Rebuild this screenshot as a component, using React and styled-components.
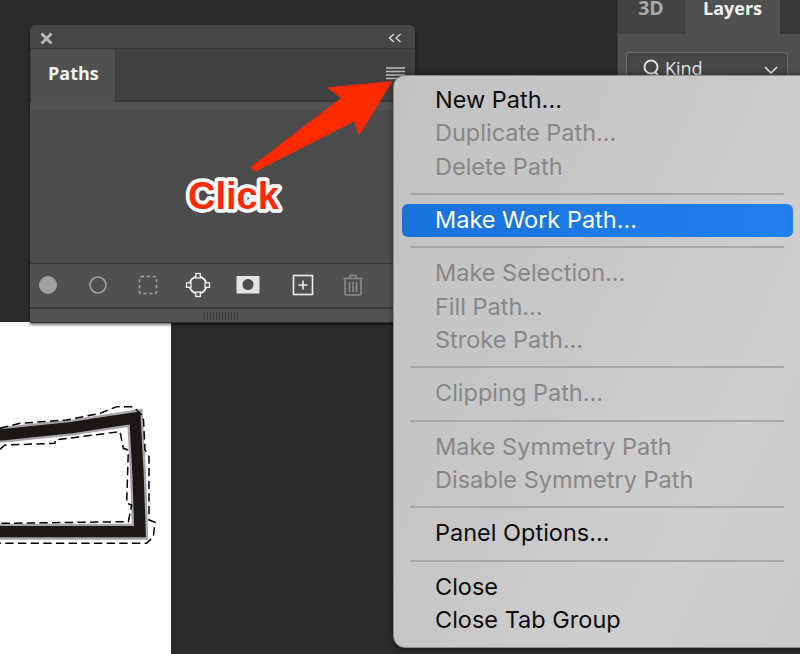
import React from "react";
import styled, { createGlobalStyle } from "styled-components";

const Global = createGlobalStyle`
  html, body { margin: 0; padding: 0; background: #282828; }
  #root { width: 800px; height: 654px; }
`;
const Desktop = styled.div`
  position: relative; width: 800px; height: 654px; overflow: hidden; background: #2a2a2a;
  font-family: "Open Sans", "Liberation Sans", sans-serif;
`;
const Artboard = styled.div`
  position: absolute; left: 0; top: 322px; width: 171px; height: 332px; background: #fff; padding-top: 68px; box-sizing: border-box;
`;
const ArtSvg = styled.svg`
  display: block;
`;
const Panel = styled.section`
  position: absolute; left: 30px; top: 25px; width: 385px; height: 298px; box-sizing: border-box;
  background: #4c4c4c; border-radius: 6px 6px 0 0;
  box-shadow: 0 2px 3px rgba(0,0,0,.55);
  display: flex; flex-direction: column; overflow: hidden;
`;
const TitleBar = styled.div`
  flex: none; background: #464646; border-bottom: 1px solid #383838;
  display: flex; align-items: center; justify-content: space-between; padding: 3px 13px 0 10px; box-sizing: content-box; height: 20px;
`;
const TabRow = styled.div`
  height: 51px; flex: none; display: flex; background: #414141; border-bottom: 2px solid #383838; box-sizing: content-box;
`;
const PathsTab = styled.div`
  width: 85px; margin-left: 1px; margin-bottom: -2px; background: #505050; border-right: 1px solid #383838; box-sizing: border-box;
  color: #f2f2f2; font-weight: 700; font-size: 18px; padding: 12px 0 0 17px; line-height: 24px;
`;
const Hamburger = styled.svg`
  margin: 18px 10px 0 auto; flex: none;
`;
const Body = styled.div`
  flex: 1; background: linear-gradient(#525252 0, #525252 8px, #4c4c4c 9px);
`;
const Footer = styled.div`
  height: 46px; flex: none; background: #505050; border-top: 1px solid #3a3a3a; border-bottom: 2px solid #3a3a3a; box-sizing: border-box;
  display: flex; align-items: center; padding: 0 0 1px 0; gap: 14px;
`;
const FootIcon = styled.svg`
  width: 36px; height: 36px; flex: none; margin-left: ${p => p.$push || 0}px;
`;
const Grip = styled.div`
  height: 14px; flex: none; background: #515151; display: flex; align-items: center; justify-content: center; border-bottom: 1px solid #2e2e2e; padding-right: 2px; box-sizing: border-box;
`;
const GripMark = styled.div`
  width: 35px; height: 8px;
  background: repeating-linear-gradient(90deg, #3a3a3a 0 1px, transparent 1px 3px);
`;
const RightDock = styled.aside`
  position: absolute; left: 617px; top: 0; width: 183px; height: 100px; background: #505050; border-left: 1px solid #3a3a3a;
`;
const DockTabs = styled.div`
  display: flex; height: 34px; background: #383838;
`;
const DockTab = styled.div`
  width: ${p => p.$w}px; box-sizing: border-box; background: ${p => p.$active ? "#505050" : "#434343"};
  color: ${p => p.$active ? "#f2f2f2" : "#a8a8a8"}; font-weight: 700; font-size: ${p => p.$active ? 18 : 19.5}px; line-height: 16px; text-align: center;
  border-right: 1px solid #383838;
`;
const KindBox = styled.div`
  margin: 18px 0 0 8px; width: 162px; height: 40px; box-sizing: border-box; border: 1px solid #6a6a6a; border-radius: 3px; background: #474747;
  display: flex; padding: 3px 9px 0 15px; color: #e4e4e4; font-size: 18px; gap: 3px; line-height: 24px;
`;
const KindLabel = styled.span`flex: 1; font-weight: 400;`;
const Menu = styled.nav`
  position: absolute; left: 393px; top: 75px; width: 420px; height: 573px; box-sizing: border-box;
  border-radius: 12px; background: linear-gradient(115deg, #c2c2c2 0%, #c9c8c8 45%, #d0cfcf 75%, #c8c8c8 100%);
  border: 1px solid #8d8d8d; padding: 8px 0 0 8px; box-shadow: 0 0 6px rgba(0,0,0,.45);
  font-family: Inter, "Liberation Sans", sans-serif; font-size: 23.5px;
`;
const Item = styled.div`
  height: 33.34px; line-height: 32px; width: 391px; box-sizing: border-box; padding-left: 33px;
  color: ${p => p.$active ? "#fff" : p.$off ? "#878787" : "#0c0c0c"};
  background: ${p => p.$active ? "linear-gradient(90deg,#1a72dc,#2080ee)" : "none"};
  border-radius: 6px; white-space: nowrap;
`;
const Sep = styled.div`
  height: 2px; margin: 9px 0 9px 8px; width: 374px; background: #a9a8a8;
`;
const Overlay = styled.svg`
  position: absolute; left: 0; top: 0; pointer-events: none;
`;
const ClickText = styled.text`
  font-family: "Liberation Sans", sans-serif; font-weight: 700; font-size: 38px; fill: #ff2a00;
  stroke: #fff; stroke-width: 7.5px; stroke-linejoin: round; paint-order: stroke;
`;

const items = [
  ["New Path...", 0], ["Duplicate Path...", 1], ["Delete Path", 1], "-",
  ["Make Work Path...", 2], "-",
  ["Make Selection...", 1], ["Fill Path...", 1], ["Stroke Path...", 1], "-",
  ["Clipping Path...", 1], "-",
  ["Make Symmetry Path", 1], ["Disable Symmetry Path", 1], "-",
  ["Panel Options...", 0], "-",
  ["Close", 0], ["Close Tab Group", 0],
];

const BAND = "M-10 136 L220 112 L330 95 L405 84 L414 250 L420 425 L-10 425";
const ANTS_OUT = "M0 115 L60 100 L200 90 L300 70 L350 50 L400 50 L430 80 L435 180 L447 200 L447 390 L465 397 L460 440 L440 460 L0 460";
const ANTS_IN = "M0 178 L15 165 L165 160 L165 150 L360 125 L370 175 L385 180 L380 340 L395 345 L385 395 L0 400";

export default function App() {
  return (
    <Desktop>
      <Global />
      <Artboard>
        <ArtSvg width="171" height="170" viewBox="0 0 513 510">
          <path d={BAND} fill="none" stroke="#a8a4ac" strokeWidth="48" />
          <path d={BAND} fill="none" stroke="#1b1715" strokeWidth="34" />
          <path d={ANTS_OUT} fill="none" stroke="#000" strokeWidth="4.5" strokeDasharray="25 13" />
          <path d={ANTS_IN} fill="none" stroke="#000" strokeWidth="4.5" strokeDasharray="25 13" />
        </ArtSvg>
      </Artboard>
      <RightDock>
        <DockTabs>
          <DockTab $w={67}>3D</DockTab>
          <DockTab $w={96} $active>Layers</DockTab>
        </DockTabs>
        <KindBox>
          <svg width="20" height="26" viewBox="0 0 20 26"><circle cx="9" cy="11" r="6.5" fill="none" stroke="#e0e0e0" strokeWidth="2" /><path d="M13 16l5 6" stroke="#e0e0e0" strokeWidth="2.5" /></svg>
          <KindLabel>Kind</KindLabel>
          <svg width="14" height="24" viewBox="0 0 14 24"><path d="M1 11l6 6 6-6" fill="none" stroke="#ddd" strokeWidth="1.6" /></svg>
        </KindBox>
      </RightDock>
      <Panel>
        <TitleBar>
          <svg width="13" height="13" viewBox="0 0 13 13"><path d="M1.500 1.500l10 10M11.500 1.500l-10 10" stroke="#b5b5b5" strokeWidth="3" /></svg>
          <svg width="14" height="10" viewBox="0 0 14 10"><path d="M6 1L1.500 5 6 9M12.500 1L8 5l4.500 4" fill="none" stroke="#e0e0e0" strokeWidth="1.3" /></svg>
        </TitleBar>
        <TabRow>
          <PathsTab>Paths</PathsTab>
          <Hamburger width="19" height="13" viewBox="0 0 19 13"><path d="M0 1H19M0 4.500H19M0 8H19M0 11.500H19" stroke="#bdbdbd" strokeWidth="1.4" /></Hamburger>
        </TabRow>
        <Body />
        <Footer>
          <FootIcon viewBox="0 0 36 36"><circle cx="18" cy="18" r="9" fill="#a0a0a0" /></FootIcon>
          <FootIcon viewBox="0 0 36 36"><circle cx="18" cy="18" r="8" fill="none" stroke="#a0a0a0" strokeWidth="1.6" /></FootIcon>
          <FootIcon viewBox="0 0 36 36"><rect x="9.500" y="9.500" width="17" height="17" rx="1.500" fill="none" stroke="#a0a0a0" strokeWidth="1.6" strokeDasharray="3.2 2.6" /></FootIcon>
          <FootIcon viewBox="0 0 36 36">
            <circle cx="18" cy="18" r="8.500" fill="none" stroke="#f0f0f0" strokeWidth="1.8" />
            <g fill="#505050" stroke="#f0f0f0" strokeWidth="1.3"><rect x="15.800" y="6.500" width="4.500" height="4.500" /><rect x="15.800" y="25" width="4.500" height="4.500" /><rect x="6.500" y="15.800" width="4.500" height="4.500" /><rect x="25" y="15.800" width="4.500" height="4.500" /></g>
          </FootIcon>
          <FootIcon viewBox="0 0 36 36"><rect x="6.500" y="9" width="23" height="17.500" rx="1" fill="#e4e4e4" /><circle cx="18" cy="17.500" r="5.500" fill="#4a4a4a" /></FootIcon>
          <FootIcon viewBox="0 0 36 36" $push={5}><rect x="8.500" y="8.500" width="19" height="19" fill="none" stroke="#eee" strokeWidth="1.6" /><path d="M13.500 18h9M18 13.500v9" stroke="#eee" strokeWidth="1.6" /></FootIcon>
          <FootIcon viewBox="0 0 36 36"><g fill="none" stroke="#8c8c8c" strokeWidth="1.6"><path d="M10 12.500V27a1 1 0 0 0 1 1h14a1 1 0 0 0 1-1V12.500" /><path d="M8.500 11.500h19M15 11V8.500h6V11M14.500 15v10M18 15v10M21.500 15v10" /></g></FootIcon>
        </Footer>
        <Grip><GripMark /></Grip>
      </Panel>
      <Menu>
        {items.map((it, i) => it === "-" ? <Sep key={i} /> : (
          <Item key={i} $off={it[1] === 1} $active={it[1] === 2}>{it[0]}</Item>
        ))}
      </Menu>
      <Overlay width="800" height="654" viewBox="0 0 800 654">
        <path d="M391 82 L329 88 L342 98 L252 167 L255 171 L355 120 L359 134Z" fill="#ff2a00" stroke="#ff2a00" strokeWidth="1.5" strokeLinejoin="round" />
        <ClickText x="188" y="209">Click</ClickText>
      </Overlay>
    </Desktop>
  );
}
